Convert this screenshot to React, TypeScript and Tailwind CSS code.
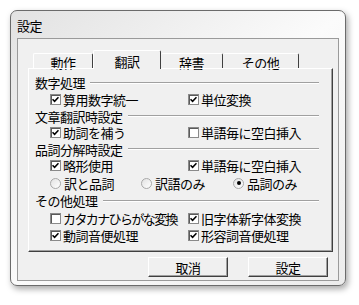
import React from 'react';

const font = { fontFamily: '"Noto Sans CJK JP", "Noto Sans", sans-serif' };
const txt = 'text-[13px] tracking-[-0.5px] leading-none text-black';

function Check({ checked, label, narrow }: { checked: boolean; label: string; narrow?: boolean }) {
  return (
    <div className="flex items-center">
      <div className="w-[11px] h-[11px] bg-white border border-[#8a8a8a] shadow-[inset_1px_1px_0_#5a5a5a] flex items-center justify-center">
        {checked && (
          <svg width="7" height="7" viewBox="0 0 7 7">
            <path d="M0.5 3.2 L2.6 5.3 L6.5 1.2" stroke="#000" strokeWidth="1.6" fill="none" />
          </svg>
        )}
      </div>
      <span className={narrow ? 'ml-[2px] text-[13px] tracking-[-1.6px] leading-none text-black' : `ml-[2px] ${txt}`}>{label}</span>
    </div>
  );
}

function Radio({ checked, label }: { checked: boolean; label: string }) {
  return (
    <div className="flex items-center">
      <div className="w-[11px] h-[11px] rounded-full border border-[#a8a8a8] bg-linear-to-br from-[#e2e2e2] to-white flex items-center justify-center">
        {checked && <div className="w-[4px] h-[4px] rounded-full bg-black" />}
      </div>
      <span className={`ml-[3px] ${txt}`}>{label}</span>
    </div>
  );
}

function Header({ label, h }: { label: string; h: string }) {
  return (
    <div className={`flex items-center ${h}`}>
      <span className={txt}>{label}</span>
      <div className="ml-[5px] flex-1 h-0 border-t border-[#a0a0a0] border-b border-b-white" />
    </div>
  );
}

export default function App() {
  return (
    <div className="w-[359px] h-[305px] bg-white overflow-hidden pt-[10px] pl-[10px]" style={font}>
      {/* window frame */}
      <div className="w-[336px] h-[276px] rounded-[7px] border border-[#6b6b6b] bg-linear-to-br from-[#e2e2e2] via-[#fbfbfb] to-[#ececec] shadow-[2px_3px_6px_rgba(0,0,0,0.35)] flex flex-col">
        <div className="h-[27px] pl-[6px] pt-[2px] flex items-center">
          <span className={txt}>設定</span>
        </div>

        {/* client area */}
        <div className="mx-[6px] h-[243px] border border-[#9a9a9a] bg-[#f0f0f0] flex flex-col pt-[11px] pl-[10px] pr-[5px]">
          {/* tabs */}
          <div className="h-[18px] flex items-end pl-[5px]">
            <div className="w-[60px] h-[15px] border-t border-l border-white border-r border-r-[#404040] rounded-t-[2px] flex items-center justify-center pt-[3px]">
              <span className={txt}>動作</span>
            </div>
            <div className="relative z-10 w-[68px] h-[19px] mb-[-1px] bg-[#f0f0f0] border-t border-l border-white border-r border-r-[#404040] rounded-t-[2px] flex items-start justify-center pt-[4px]">
              <span className={txt}>翻訳</span>
            </div>
            <div className="w-[62px] h-[15px] border-t border-white border-r border-r-[#404040] rounded-t-[2px] flex items-center justify-center pt-[3px]">
              <span className={txt}>辞書</span>
            </div>
            <div className="w-[76px] h-[15px] border-t border-white border-r border-r-[#404040] rounded-t-[2px] flex items-center justify-center pt-[3px]">
              <span className={txt}>その他</span>
            </div>
          </div>

          {/* tab panel */}
          <div className="h-[184px] border-t border-l border-white border-r border-b border-r-[#404040] border-b-[#404040] shadow-[inset_-1px_-1px_0_#a0a0a0] flex flex-col pt-[5px] pl-[6px] pr-[13px]">
            <Header label="数字処理" h="h-[17px]" />
            <div className="h-[17px] flex items-center pl-[15px]">
              <div className="w-[138px]"><Check checked label="算用数字統一" /></div>
              <Check checked label="単位変換" />
            </div>
            <Header label="文章翻訳時設定" h="h-[16px]" />
            <div className="h-[17px] flex items-center pl-[15px]">
              <div className="w-[138px]"><Check checked label="助詞を補う" /></div>
              <Check checked={false} label="単語毎に空白挿入" />
            </div>
            <Header label="品詞分解時設定" h="h-[16px]" />
            <div className="h-[17px] flex items-center pl-[15px]">
              <div className="w-[138px]"><Check checked label="略形使用" /></div>
              <Check checked label="単語毎に空白挿入" />
            </div>
            <div className="h-[18px] flex items-center pl-[15px]">
              <div className="w-[91px]"><Radio checked={false} label="訳と品詞" /></div>
              <div className="w-[92px]"><Radio checked={false} label="訳語のみ" /></div>
              <Radio checked label="品詞のみ" />
            </div>
            <Header label="その他処理" h="h-[17px]" />
            <div className="h-[18px] flex items-center pl-[15px]">
              <div className="w-[138px]"><Check checked={false} narrow label="カタカナひらがな変換" /></div>
              <Check checked label="旧字体新字体変換" />
            </div>
            <div className="h-[17px] flex items-center pl-[15px]">
              <div className="w-[138px]"><Check checked label="動詞音便処理" /></div>
              <Check checked label="形容詞音便処理" />
            </div>
          </div>

          {/* buttons */}
          <div className="mt-[5px] flex justify-end gap-[20px] pr-[5px]">
            {['取消', '設定'].map((t) => (
              <button
                key={t}
                className="w-[80px] h-[20px] bg-[#f0f0f0] border-t border-l border-white border-r border-b border-r-[#404040] border-b-[#404040] shadow-[inset_-1px_-1px_0_#a0a0a0] flex items-center justify-center"
              >
                <span className={txt}>{t}</span>
              </button>
            ))}
          </div>
        </div>
      </div>
    </div>
  );
}
